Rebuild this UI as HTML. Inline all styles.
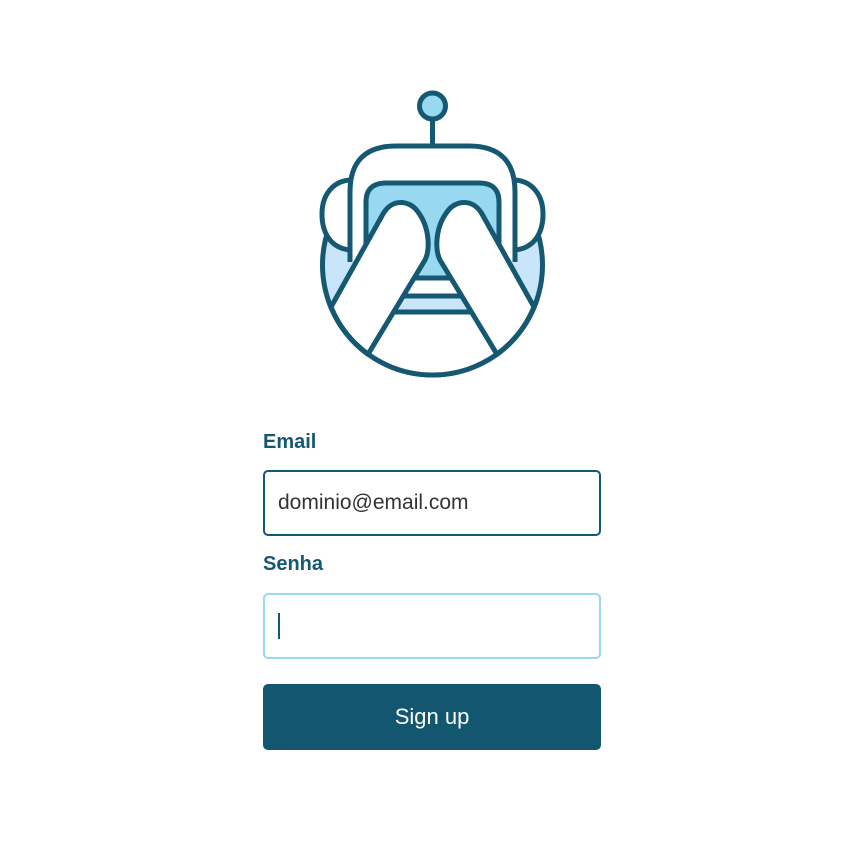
<!DOCTYPE html>
<html><head><style>
body{margin:0;background:#fff;width:862px;height:853px;position:relative;font-family:"Liberation Sans",sans-serif}
.lbl{position:absolute;left:263px;font-weight:bold;font-size:20px;color:#155872}
.inp{position:absolute;left:263px;width:334px;height:62px;border:2px solid #155872;border-radius:5px;box-sizing:content-box}
.btn{position:absolute;left:263px;top:684px;width:338px;height:66px;background:#135670;border-radius:5px;color:#fff;font-size:22px;text-align:center;line-height:66px}
</style></head><body>
<svg style="position:absolute;left:0;top:0" width="862" height="420">
<defs><clipPath id="c"><circle cx="432.5" cy="265" r="110"/></clipPath></defs>
<g stroke="#155872" stroke-width="5" stroke-linejoin="round">
<line x1="432.5" y1="118" x2="432.5" y2="146"/>
<circle cx="432.5" cy="106" r="13" fill="#98d8f0"/>
<circle cx="432.5" cy="265" r="110" fill="#c8e5fa"/>
<g clip-path="url(#c)">
<path d="M350,400 V334 Q350,312 372,312 H493 Q515,312 515,334 V400 Z" fill="#fff" stroke="none"/>
<path d="M350,400 V334 Q350,312 372,312 H493 Q515,312 515,334 V400" fill="none"/>
</g>
<path d="M350,250 C330,248 322,232 322,214 C322,194 334,180 352,180 Z" fill="#fff"/>
<path d="M515,250 C535,248 543,232 543,214 C543,194 531,180 513,180 Z" fill="#fff"/>
<path d="M350,262 V192 Q350,146 396,146 H469 Q515,146 515,192 V262" fill="#fff"/>
<path d="M366,262 V202 Q366,183 386,183 H479 Q499,183 499,202 V262" fill="#98d8f0"/>
<rect x="405" y="262" width="55" height="16" fill="#98d8f0" stroke="none"/>
<rect x="390" y="278" width="85" height="18" fill="#fff"/>
<path d="M331,307 L383,214 C392,198 410,200 418,212 C430,228 430,250 425,260 L368,354.3 A110,110 0 0 1 331,307 Z" fill="#fff"/>
<path d="M534,307 L482,214 C473,198 455,200 447,212 C435,228 435,250 440,260 L497,354.3 A110,110 0 0 0 534,307 Z" fill="#fff"/>
<circle cx="432.5" cy="265" r="110" fill="none" clip-path="url(#b)"/>
</g>
<defs><clipPath id="b"><rect x="0" y="300" width="862" height="120"/></clipPath></defs>
</svg>
<div class="lbl" style="top:431px">Email</div>
<div class="inp" style="top:470px"><span style="position:absolute;left:13px;top:19px;font-size:21px;color:#333">dominio@email.com</span></div>
<div class="lbl" style="top:553px">Senha</div>
<div class="inp" style="top:593px;border-color:#98d8f0"><span style="position:absolute;left:13px;top:18px;width:2px;height:26px;background:#155872"></span></div>
<div class="btn">Sign up</div>
</body></html>
